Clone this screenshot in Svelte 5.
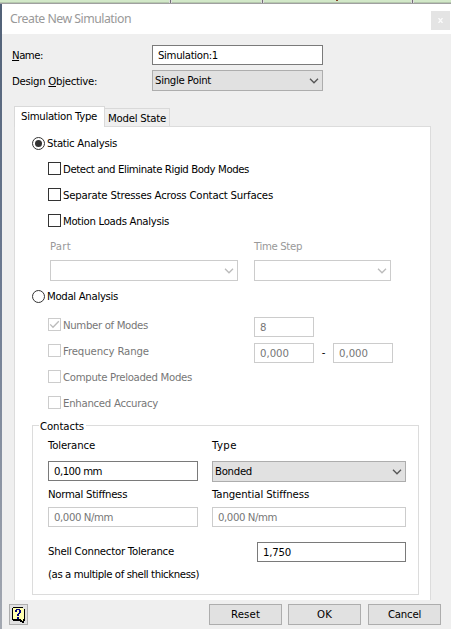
<script>
  const analysisOptions = [
    ['Detect and Eliminate Rigid Body Modes', 186],
    ['Separate Stresses Across Contact Surfaces', 210],
    ['Motion Loads Analysis', 106]
  ];

  // Spreads a label over its design width by adjusting the tracking.
  function fit(node, width) {
    const length = node.textContent.length;
    const natural = node.getBoundingClientRect().width;
    node.style.letterSpacing = `${(width - natural) / length}px`;
  }
</script>

{#snippet t(text, width)}<span class="t" use:fit={width}>{text}</span>{/snippet}

{#snippet chevron()}
  <svg class="chevron" width="10" height="6" viewBox="0 0 10 6"><path d="M1 .8 L5 4.8 L9 .8" /></svg>
{/snippet}

<div class="screen">
  <div class="backdrop"><i style:left="169px"></i><i style:left="261px"></i><i style:left="411px"></i><b></b></div>
  <div class="dialog">
    <header>
      <h1>{@render t('Create New Simulation', 121)}</h1>
      <button class="close" aria-label="Close"><svg width="5" height="5" viewBox="0 0 5 5"><path d="M.5 0 L4.5 5 M4.5 0 L.5 5" /></svg></button>
    </header>

    <div class="fields">
      <div class="row name">
        <label><span class="t" use:fit={31}><u>N</u>ame:</span></label>
        <div class="box input">{@render t('Simulation:1', 60)}</div>
      </div>
      <div class="row objective">
        <label><span class="t" use:fit={85}>Design <u>O</u>bjective:</span></label>
        <div class="box select">{@render t('Single Point', 56)}{@render chevron()}</div>
      </div>
    </div>

    <nav>
      <div class="tab active">{@render t('Simulation Type', 76)}</div>
      <div class="tab">{@render t('Model State', 58)}</div>
    </nav>

    <main>
      <div class="row radio"><i class="dot on"></i>{@render t('Static Analysis', 70)}</div>
      {#each analysisOptions as [name, width]}
        <div class="row check"><i class="mark"></i>{@render t(name, width)}</div>
      {/each}
      <div class="pair off">
        <div class="part"><label>{@render t('Part', 21)}</label><div class="box select">{@render chevron()}</div></div>
        <div class="step"><label>{@render t('Time Step', 48)}</label><div class="box select">{@render chevron()}</div></div>
      </div>
      <div class="row radio modal"><i class="dot"></i>{@render t('Modal Analysis', 71)}</div>
      <div class="row check off">
        <div class="choice"><i class="mark"><svg width="11" height="11" viewBox="0 0 11 11"><path d="M1.2 5.4 L4 8.3 L9.8 2.2" /></svg></i>{@render t('Number of Modes', 85)}</div>
        <div class="box input">{@render t('8', 7)}</div>
      </div>
      <div class="row check off">
        <div class="choice"><i class="mark"></i>{@render t('Frequency Range', 86)}</div>
        <div class="box input">{@render t('0,000', 29)}</div>
        <span class="dash">-</span>
        <div class="box input">{@render t('0,000', 29)}</div>
      </div>
      <div class="row check off"><i class="mark"></i>{@render t('Compute Preloaded Modes', 129)}</div>
      <div class="row check off"><i class="mark"></i>{@render t('Enhanced Accuracy', 95)}</div>

      <section>
        <div class="legend">{@render t('Contacts', 44)}</div>
        <div class="contacts">
          <div class="cell"><label>{@render t('Tolerance', 47)}</label><div class="box input">{@render t('0,100 mm', 48)}</div></div>
          <div class="cell"><label>{@render t('Type', 25)}</label><div class="box select">{@render t('Bonded', 37)}{@render chevron()}</div></div>
          <div class="cell"><label>{@render t('Normal Stiffness', 79)}</label><div class="box input grey">{@render t('0,000 N/mm', 59)}</div></div>
          <div class="cell"><label>{@render t('Tangential Stiffness', 97)}</label><div class="box input grey">{@render t('0,000 N/mm', 59)}</div></div>
        </div>
        <div class="row shell"><label>{@render t('Shell Connector Tolerance', 126)}</label><div class="box input">{@render t('1,750', 28)}</div></div>
        <div class="row note">{@render t('(as a multiple of shell thickness)', 151)}</div>
      </section>
    </main>

    <footer>
      <button class="help" aria-label="Help">
        <svg width="15" height="17" viewBox="0 0 15 17" shape-rendering="crispEdges">
          <path d="M2 2 H14 V14 H13 V16 H11 V15 H9 V14 H2 Z" fill="#000" />
          <path d="M2 1 H12 V2 H13 V12 H12 V14 H11 V13 H10 V12 H2 Z" fill="#ffffb0" />
          <path d="M2 .5 H12 M1.5 1 V13" stroke="#000" />
          <path d="M4 3 H5 V2 H9 V3 H10 V6 H9 V7 H8 V9 H6 V7 H7 V6 H8 V3 H6 V5 H4 Z M6 10 H8 V12 H6 Z" fill="#000080" />
        </svg>
      </button>
      <button>{@render t('Reset', 29)}</button>
      <button>{@render t('OK', 15)}</button>
      <button>{@render t('Cancel', 33)}</button>
    </footer>
  </div>
</div>

<style>
  .screen {
    width: 451px;
    height: 629px;
    overflow: hidden;
    box-sizing: border-box;
    background: linear-gradient(#516177, #6c7a91 45%, #a3a8b1);
    font: 11.3px/16px 'DejaVu Sans Condensed', 'DejaVu Sans', sans-serif;
    font-stretch: condensed;
    color: #000;
  }
  .screen :global(*) { box-sizing: border-box; }
  .t { display: block; width: max-content; white-space: pre; }
  .backdrop {
    position: relative;
    height: 4px;
    background: linear-gradient(#d2e8c8 0 2px, #b6c9ae 2px 3px, #a0a0a0 3px);
  }
  .backdrop i { position: absolute; top: 0; width: 3px; height: 3px; background: #746f77; border: solid #dedede; border-width: 0 1px; }
  .backdrop b { position: absolute; left: 336px; top: 0; width: 2px; height: 1px; background: #864124; }
  .dialog { margin-left: 2px; height: 625px; background: #efefef; display: flex; flex-direction: column; }
  header { height: 30px; flex: none; background: #fff; display: flex; justify-content: space-between; padding: 7px 1px 0 8px; }
  h1 { margin: 0; font: 400 12.3px/16px 'Noto Sans', 'Open Sans', sans-serif; color: #999; }
  button { padding: 0; border: 1px solid #adadad; background: #e1e1e1; font: inherit; color: #000; display: flex; align-items: center; justify-content: center; }
  .close { width: 19px; height: 19px; border: 0; background: #e4e4e4; }
  .close path { stroke: #fbfbfb; stroke-width: 1.3; }
  .row { display: flex; align-items: center; }
  .fields { padding: 11px 0 0 10px; }
  .fields label { width: 140px; padding-top: 2px; }
  .name { height: 20px; }
  .objective { height: 21px; margin-top: 5px; }
  u { text-decoration: underline; text-underline-offset: 1px; text-decoration-thickness: 1px; }
  .box { display: flex; align-items: center; background: #fff; border: 1px solid #7a7a7a; height: 20px; padding-left: 5px; flex: none; }
  .box .t { padding-top: 1px; }
  .fields .box { width: 171px; }
  .select { height: 21px; background: #e1e1e1; border-color: #adadad; padding: 0 3px 0 2px; }
  .chevron { margin-left: auto; }
  .chevron path { fill: none; stroke: #555; stroke-width: 1.3; }
  nav { display: flex; align-items: flex-end; height: 20px; margin: 15px 0 0 12px; flex: none; z-index: 1; }
  .tab { height: 18px; width: 65px; padding: 2px 0 0 3px; border: 1px solid #d9d9d9; border-left: 0; border-bottom: 0; }
  .tab.active { height: 21px; margin-bottom: -1px; width: 91px; padding: 2px 0 0 6px; border-left: 1px solid #d9d9d9; background: #fff; }
  main { flex: none; width: 417px; height: 474px; margin-left: 12px; background: #fff; border: 1px solid #dcdcdc; border-bottom: 0; padding-top: 8px; }
  .radio { height: 17px; padding-left: 17px; margin-bottom: 4px; }
  .radio .t { padding-top: 1px; }
  .check > .t, .choice > .t { padding-top: 2px; }
  .dot { width: 13px; height: 13px; border: 1px solid #333; border-radius: 50%; margin-right: 2px; display: grid; place-items: center; flex: none; }
  .dot.on::after { content: ''; width: 7px; height: 7px; background: #333; border-radius: 50%; }
  .check { height: 26px; padding-left: 33px; }
  .mark { width: 13px; height: 13px; border: 1px solid #333; margin: 0 2px 1px 0; flex: none; display: flex; }
  .mark path { fill: none; stroke: #bbb; stroke-width: 1.3; }
  .off { color: #777; }
  .off .mark, .off .box { border-color: #ccc; }
  .off .box { background: #fff; }
  .off .chevron path { stroke: #bbb; }
  .choice { display: flex; align-items: center; width: 206px; }
  .check .input { width: 60px; margin-top: 4px; }
  .dash { width: 19px; padding-top: 4px; text-align: center; color: #000; }
  .pair { display: flex; gap: 16px; padding: 5px 0 0 35px; color: #999; }
  .pair label { display: block; height: 21px; }
  .part { width: 188px; }
  .step { width: 137px; }
  .modal { margin: 7px 0; }
  section { width: 387px; height: 170px; margin: 9px 0 0 17px; border: 1px solid #dcdcdc; padding: 0 12px 0 15px; }
  .legend { width: 47px; height: 14px; margin: -7px 0 0 -9px; padding-left: 1px; background: #fff; }
  .contacts { display: grid; grid-template-columns: 150px 194px; column-gap: 14px; grid-template-rows: 49px 40px; padding-top: 5px; }
  .cell { display: flex; flex-direction: column; }
  .cell label { height: 23px; }
  .cell:nth-child(n + 3) label { height: 20px; }
  .box.grey { border-color: #ccc; color: #777; }
  .shell { justify-content: space-between; margin-top: 15px; height: 20px; }
  .shell .box { width: 149px; }
  .note { height: 16px; margin-top: 5px; }
  footer { display: flex; height: 21px; margin: 4px 10px 0 7px; }
  footer button { width: 73px; margin-left: 6px; padding-top: 1px; }
  footer button:last-child { margin-left: 7px; }
  footer .help { width: 19px; margin: 0 auto 0 0; }
</style>
